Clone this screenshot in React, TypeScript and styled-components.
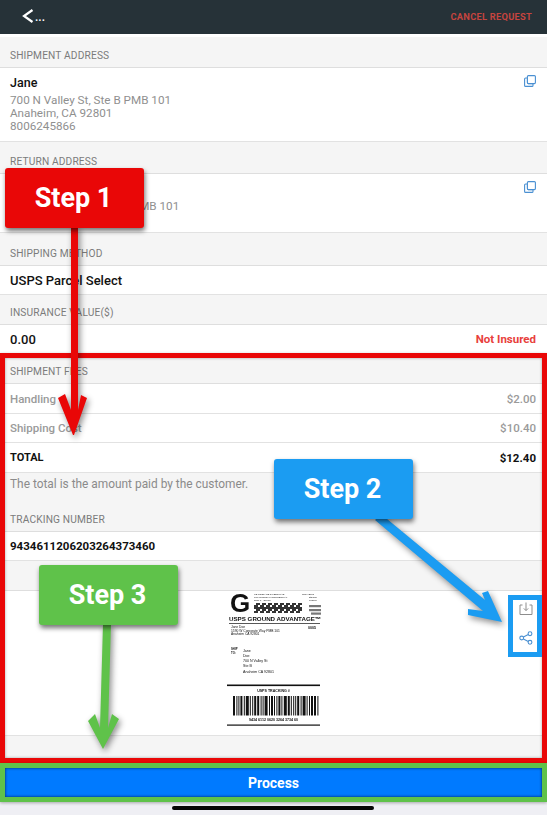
import React from "react";
import styled, { createGlobalStyle } from "styled-components";

const Global = createGlobalStyle`
  html, body { margin: 0; padding: 0; background: #efeff4; }
  body { font-family: Roboto, "Liberation Sans", sans-serif; overflow: hidden; }
`;
const Page = styled.div`
  position: relative;
  width: 547px;
  height: 815px;
  overflow: hidden;
  background: #efeff4;
  display: flex;
  flex-direction: column;
`;
const Header = styled.header`
  height: 34px;
  flex: none;
  background: #263238;
  display: flex;
  align-items: center;
  justify-content: space-between;
  padding: 0 15px 2px 22px;
  box-sizing: border-box;
`;
const Back = styled.div`
  display: flex;
  align-items: flex-end;
  gap: 1px;
  color: #fff;
  font-size: 12px;
  line-height: 12px;
  font-weight: 500;
`;
const Cancel = styled.span`
  color: #c5443f;
  font-size: 9.3px;
  font-weight: 700;
  letter-spacing: 0.25px;
`;
const Strip = styled.div`
  height: 3px;
  flex: none;
  background: #fff;
`;
const Label = styled.div<{ $h: number }>`
  height: ${(p) => p.$h}px;
  flex: none;
  box-sizing: border-box;
  background: #f5f5f5;
  border-bottom: 1px solid #dedede;
  padding: 0 10px 5px;
  display: flex;
  align-items: flex-end;
  color: #7b7b7b;
  font-size: 10.2px;
  line-height: 12px;
  letter-spacing: 0.15px;
`;
const Row = styled.div<{ $h: number }>`
  height: ${(p) => p.$h}px;
  flex: none;
  box-sizing: border-box;
  background: #fff;
  border-bottom: 1px solid #e2e2e2;
  padding: 0 11px 0 10px;
  display: flex;
  align-items: center;
  justify-content: space-between;
`;
const Value = styled.span`
  color: #111;
  font-size: 13px;
  font-weight: 500;
`;
const Muted = styled.span`
  color: #9a9a9a;
  font-size: 11.5px;
  font-weight: 500;
`;
const Strong = styled.span<{ $size?: number }>`
  color: #111;
  font-size: ${(p) => p.$size ?? 11}px;
  font-weight: 700;
`;
const NotInsured = styled.span`
  color: #e8413c;
  font-size: 11.5px;
  font-weight: 700;
`;
const Address = styled(Row)`
  align-items: flex-start;
  padding-top: 7px;
`;
const AddressText = styled.div`
  display: flex;
  flex-direction: column;
`;
const Name = styled.div`
  color: #111;
  font-size: 12.5px;
  font-weight: 500;
  line-height: 15px;
  margin-bottom: 4px;
`;
const Line = styled.div`
  color: #8f8f8f;
  font-size: 11.7px;
  line-height: 13px;
`;
const NoteBlock = styled.div`
  height: 59px;
  flex: none;
  box-sizing: border-box;
  background: #f5f5f5;
  border-bottom: 1px solid #dedede;
  padding: 5px 10px 0;
  display: flex;
  flex-direction: column;
  justify-content: space-between;
`;
const Note = styled.div`
  color: #8b8b8b;
  font-size: 11.9px;
  line-height: 13px;
`;
const TrackLabel = styled.div`
  color: #7b7b7b;
  font-size: 10.2px;
  line-height: 12px;
  letter-spacing: 0.15px;
  margin-bottom: 5px;
`;
const Gray = styled.div<{ $h: number; $line?: boolean }>`
  height: ${(p) => p.$h}px;
  flex: none;
  box-sizing: border-box;
  background: #f5f5f5;
  border-bottom: ${(p) => (p.$line ? "1px solid #dedede" : "none")};
`;
const LabelRow = styled.div`
  height: 145px;
  flex: none;
  box-sizing: border-box;
  background: #fff;
  border-bottom: 1px solid #e2e2e2;
  display: flex;
  justify-content: center;
  padding-left: 7px;
`;
const LabelSvg = styled.svg`
  width: 100px;
  height: 144px;
  display: block;
  overflow: visible;
  filter: blur(0.4px);
`;
const Footer = styled.div`
  height: 39px;
  flex: none;
  box-sizing: border-box;
  padding: 5px;
  position: relative;
`;
const ProcessButton = styled.button`
  width: 100%;
  height: 100%;
  display: block;
  border: 0;
  padding: 0;
  background: #007aff;
  color: #fff;
  font: 700 14px Roboto, sans-serif;
  box-shadow: inset 0 0 3px rgba(0, 40, 110, 0.65);
`;
const HomeBar = styled.div`
  width: 202px;
  height: 3.5px;
  border-radius: 2px;
  background: #050505;
  margin: 4px auto 0 172px;
`;
const Frame = styled.div<{ $top: number; $left: number; $w: number; $h: number; $c: string }>`
  position: absolute;
  top: ${(p) => p.$top}px;
  left: ${(p) => p.$left}px;
  width: ${(p) => p.$w}px;
  height: ${(p) => p.$h}px;
  box-sizing: border-box;
  border: 5px solid ${(p) => p.$c};
  box-shadow: 0 1px 3px rgba(0, 0, 0, 0.3), inset 0 0 3px rgba(0, 0, 0, 0.35);
  pointer-events: none;
`;
const SideFrame = styled(Frame)`
  box-shadow: none;
  display: flex;
  flex-direction: column;
  align-items: center;
  padding-top: 1px;
  padding-left: 1px;
  gap: 14px;
  background: #fff;
`;
const StepBox = styled.div<{ $top: number; $left: number; $c: string }>`
  position: absolute;
  top: ${(p) => p.$top}px;
  left: ${(p) => p.$left}px;
  width: 139px;
  height: 60px;
  border-radius: 3px;
  background: ${(p) => p.$c};
  color: #fff;
  font-size: 27px;
  font-weight: 700;
  display: flex;
  align-items: center;
  justify-content: center;
  padding: 0 2px 0 0;
  box-sizing: border-box;
  box-shadow: 1px 3px 5px rgba(0, 0, 0, 0.55);
`;
const ArrowSvg = styled.svg`
  position: absolute;
  top: 0;
  left: 0;
  width: 547px;
  height: 815px;
  pointer-events: none;
  filter: drop-shadow(2px 3px 3px rgba(0, 0, 0, 0.45));
`;

const CopyIcon = () => (
  <svg width="12" height="12" viewBox="0 0 12 12" fill="none" stroke="#4a90d2" strokeWidth="1.1">
    <rect x="3.4" y="0.6" width="8" height="8" rx="1" />
    <path d="M3.4 3H1.6a1 1 0 0 0-1 1v6.4a1 1 0 0 0 1 1H8a1 1 0 0 0 1-1V8.6" />
    <path d="M3.4 3v4.6a1 1 0 0 0 1 1H9" opacity="0.6" />
  </svg>
);
const Bars = () => {
  const widths = [2, 1, 1, 2, 1, 3, 1, 1, 2, 2, 1, 1, 3, 1, 2, 1, 1, 2, 1, 3, 2, 1, 1, 1, 2, 1, 3, 1, 1, 2, 2, 1];
  let x = 6;
  const out: React.ReactNode[] = [];
  widths.forEach((w, i) => {
    out.push(<rect key={i} x={x} y="105" width={w} height="19.5" fill="#111" />);
    x += w + (i % 3 === 0 ? 1.4 : 1);
  });
  return <>{out}</>;
};
const Matrix = () => {
  const out: React.ReactNode[] = [];
  for (let r = 0; r < 5; r++)
    for (let c = 0; c < 24; c++)
      if ((c * 7 + r * 5 + (c * r) % 3) % 3 !== 0)
        out.push(<rect key={`${r}-${c}`} x={27 + c * 2} y={12 + r * 2} width="2" height="2" fill="#333" />);
  return <>{out}</>;
};
const ShipLabel = () => (
  <LabelSvg viewBox="0 0 100 144" fontFamily="Liberation Sans, sans-serif" fill="#111">
    <text x="3" y="21" fontSize="26" fontWeight="700">G</text>
    <text x="27" y="4" fontSize="2.4">US POSTAGE &amp; FEES PAID</text>
    <text x="27" y="7" fontSize="2.4">LIGHTWEIGHT COMMERCIAL</text>
    <text x="27" y="10" fontSize="2.4">Zone 1 · Os 0lb</text>
    <text x="75" y="4" fontSize="2.4">from 92801</text>
    <text x="82" y="7" fontSize="2.4">stamps</text>
    <text x="82" y="10" fontSize="2.4">endicia</text>
    <Matrix />
    <rect x="82" y="14" width="12" height="2.2" fill="#777" />
    <rect x="82" y="18" width="12" height="2.2" fill="#777" />
    <rect x="84" y="21.500" width="10" height="2.2" fill="#777" />
    <text x="2" y="30" fontSize="6.2" fontWeight="700">USPS GROUND ADVANTAGE™</text>
    <rect x="2" y="32" width="91" height="0.7" />
    <text x="4" y="37" fontSize="3.3">Jane Doe</text>
    <text x="4" y="40.5" fontSize="3.3">1590 W Corporate Way PMB 101</text>
    <text x="4" y="44" fontSize="3.3">Anaheim CA 92801</text>
    <text x="81" y="38" fontSize="3.6" fontWeight="700">0005</text>
    <text x="4" y="59" fontSize="2.8" fontWeight="700">SHIP</text>
    <text x="4" y="62.5" fontSize="2.8" fontWeight="700">TO:</text>
    <text x="16" y="61" fontSize="3.6">Jane</text>
    <text x="16" y="66" fontSize="3.6">Doe</text>
    <text x="16" y="71" fontSize="3.6">700 N Valley St</text>
    <text x="16" y="76.400" fontSize="3.6">Ste B</text>
    <text x="16" y="82" fontSize="3.6">Anaheim CA 92801</text>
    <rect x="0" y="93.5" width="93" height="1.6" />
    <text x="46.5" y="100.5" fontSize="3.6" fontWeight="700" textAnchor="middle">USPS TRACKING #</text>
    <Bars />
    <text x="46.5" y="130" fontSize="3.6" fontWeight="700" textAnchor="middle">9434 6112 0620 3264 3734 60</text>
    <rect x="0" y="133.5" width="93" height="1.2" />
  </LabelSvg>
);

export default function App() {
  return (
    <Page>
      <Global />
      <Header>
        <Back>
          <svg width="12" height="14" viewBox="0 0 12 14" fill="none" stroke="#fff" strokeWidth="2.2">
            <path d="M10.5 1 2 7l8.5 6" />
          </svg>
          <span>...</span>
        </Back>
        <Cancel>CANCEL REQUEST</Cancel>
      </Header>
      <Strip />
      <Label $h={31}>SHIPMENT ADDRESS</Label>
      <Address $h={74}>
        <AddressText>
          <Name>Jane</Name>
          <Line>700 N Valley St, Ste B PMB 101</Line>
          <Line>Anaheim, CA 92801</Line>
          <Line>8006245866</Line>
        </AddressText>
        <CopyIcon />
      </Address>
      <Label $h={32}>RETURN ADDRESS</Label>
      <Address $h={59}>
        <AddressText>
          <Name>Jane Doe</Name>
          <Line>1590 W Corporate Way PMB 101</Line>
          <Line>Anaheim, CA 92801</Line>
        </AddressText>
        <CopyIcon />
      </Address>
      <Label $h={33}>SHIPPING METHOD</Label>
      <Row $h={29}><Value>USPS Parcel Select</Value></Row>
      <Label $h={30}>INSURANCE VALUE($)</Label>
      <Row $h={29}>
        <Value>0.00</Value>
        <NotInsured>Not Insured</NotInsured>
      </Row>
      <Label $h={30}>SHIPMENT FEES</Label>
      <Row $h={30}><Muted>Handling</Muted><Muted>$2.00</Muted></Row>
      <Row $h={29}><Muted>Shipping Cost</Muted><Muted>$10.40</Muted></Row>
      <Row $h={30}><Strong>TOTAL</Strong><Strong $size={11.5}>$12.40</Strong></Row>
      <NoteBlock>
        <Note>The total is the amount paid by the customer.</Note>
        <TrackLabel>TRACKING NUMBER</TrackLabel>
      </NoteBlock>
      <Row $h={29}><Strong $size={11.5}>9434611206203264373460</Strong></Row>
      <Gray $h={30} $line />
      <LabelRow><ShipLabel /></LabelRow>
      <Gray $h={27} />
      <Footer>
        <ProcessButton>Process</ProcessButton>
      </Footer>
      <HomeBar />

      <Frame $top={353} $left={0} $w={547} $h={410} $c="#e90707" />
      <Frame $top={763} $left={0} $w={547} $h={39} $c="#5fc24a" />
      <SideFrame $top={595} $left={508} $w={34} $h={62} $c="#1b9cf2">
        <svg width="16" height="16" viewBox="0 0 16 16" fill="none" stroke="#8d8d8d" strokeWidth="1">
          <path d="M4.5 4H2v9.5h12V4h-2.500M8 1.500v8M5.800 7.400 8 9.600l2.200-2.200" />
        </svg>
        <svg width="14" height="14" viewBox="0 0 14 14" fill="none" stroke="#4a90d2" strokeWidth="1.1">
          <circle cx="2.7" cy="7" r="1.9" />
          <circle cx="11" cy="2.7" r="1.9" />
          <circle cx="11" cy="11.3" r="1.9" />
          <path d="M4.400 6.100 9.300 3.600M4.400 7.900l4.900 2.500" />
        </svg>
      </SideFrame>

      <ArrowSvg viewBox="0 0 547 815">
        <path fill="#e90707" d="M71 226H78V410L81 395L87 398L74 435H73L58 398L65 394L71 410Z" />
        <path fill="#1b9cf2" d="M381 514L485 600L482 593L488 591L502 622L468 615L468 609L483 611L375 520Z" />
        <path fill="#5fc24a" d="M103 624H111L108 728L112 714L119 719L103 749L88 721L95 714L100 728Z" />
      </ArrowSvg>
      <StepBox $top={168} $left={5} $c="#e90707">Step 1</StepBox>
      <StepBox $top={459} $left={274} $c="#1b9cf2">Step 2</StepBox>
      <StepBox $top={565} $left={39} $c="#5fc24a">Step 3</StepBox>
    </Page>
  );
}
